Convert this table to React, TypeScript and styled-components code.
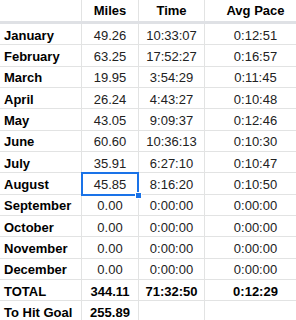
import React from "react";
import styled, { createGlobalStyle, css } from "styled-components";

const GlobalStyle = createGlobalStyle`
 html, body {
  margin: 0;
  padding: 0;
  background: #fff;
 }
 body {
  font-family: "Liberation Sans", Arial, sans-serif;
  overflow: hidden;
 }
`;

const Viewport = styled.div`
 width: 296px;
 height: 320px;
 overflow: hidden;
`;

const Sheet = styled.div`
 display: grid;
 grid-template-columns: 82px 57px 66px 102px;
 grid-template-rows: 21px 3px;
 grid-auto-rows: 21.33px;
 width: 307px;
 font-size: 13px;
 color: #111;
`;

const Cell = styled.div<{ $align?: "left" | "center"; $bold?: boolean; $selected?: boolean }>`
 position: relative;
 box-sizing: border-box;
 border-right: 1px solid #e2e3e3;
 border-bottom: 1px solid #e2e3e3;
 display: flex;
 align-items: center;
 justify-content: ${({ $align }) => ($align === "left" ? "flex-start" : "center")};
 padding: 2px 4px 0;
 white-space: nowrap;
 font-weight: ${({ $bold }) => ($bold ? 700 : 400)};
 color: ${({ $bold }) => ($bold ? "#000" : "#222")};
 ${({ $selected }) =>
  $selected &&
  css`
   z-index: 2;
   &::before {
    content: "";
    position: absolute;
    left: -1px;
    top: -1px;
    right: -1px;
    bottom: -2px;
    border: 2px solid #1a73e8;
   }
   &::after {
    content: "";
    position: absolute;
    right: -4px;
    bottom: -5px;
    width: 7px;
    height: 7px;
    background: #1a73e8;
    border: 1px solid #fff;
    box-sizing: border-box;
   }
  `}
`;

const HeaderCell = styled(Cell)`
 border-bottom: none;
 padding-top: 0;
 font-weight: 700;
 color: #000;
`;

const FrozenDivider = styled.div`
 grid-column: 1 / -1;
 background: #dfe1e5;
`;

type Row = { label: string; miles: string; time: string; pace: string; bold?: boolean };

const rows: Row[] = [
 { label: "January", miles: "49.26", time: "10:33:07", pace: "0:12:51" },
 { label: "February", miles: "63.25", time: "17:52:27", pace: "0:16:57" },
 { label: "March", miles: "19.95", time: "3:54:29", pace: "0:11:45" },
 { label: "April", miles: "26.24", time: "4:43:27", pace: "0:10:48" },
 { label: "May", miles: "43.05", time: "9:09:37", pace: "0:12:46" },
 { label: "June", miles: "60.60", time: "10:36:13", pace: "0:10:30" },
 { label: "July", miles: "35.91", time: "6:27:10", pace: "0:10:47" },
 { label: "August", miles: "45.85", time: "8:16:20", pace: "0:10:50" },
 { label: "September", miles: "0.00", time: "0:00:00", pace: "0:00:00" },
 { label: "October", miles: "0.00", time: "0:00:00", pace: "0:00:00" },
 { label: "November", miles: "0.00", time: "0:00:00", pace: "0:00:00" },
 { label: "December", miles: "0.00", time: "0:00:00", pace: "0:00:00" },
 { label: "TOTAL", miles: "344.11", time: "71:32:50", pace: "0:12:29", bold: true },
 { label: "To Hit Goal", miles: "255.89", time: "", pace: "", bold: true },
];

export default function App() {
 return (
  <Viewport>
   <GlobalStyle />
   <Sheet>
    <HeaderCell $align="left" />
    <HeaderCell>Miles</HeaderCell>
    <HeaderCell>Time</HeaderCell>
    <HeaderCell>Avg Pace</HeaderCell>
    <FrozenDivider />
    {rows.map((r) => (
     <React.Fragment key={r.label}>
      <Cell $align="left" $bold>
       {r.label}
      </Cell>
      <Cell $bold={r.bold} $selected={r.label === "August"}>
       {r.miles}
      </Cell>
      <Cell $bold={r.bold}>{r.time}</Cell>
      <Cell $bold={r.bold}>{r.pace}</Cell>
     </React.Fragment>
    ))}
   </Sheet>
  </Viewport>
 );
}
